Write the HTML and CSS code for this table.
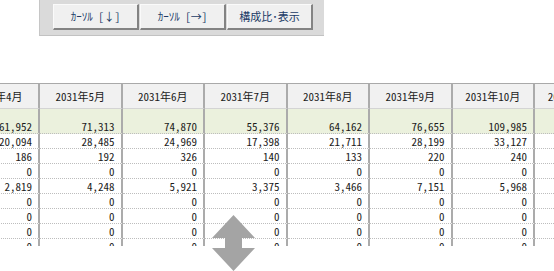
FILE: index.html
```html
<!DOCTYPE html>
<html lang="ja">
<head>
<meta charset="utf-8">
<title>月次推移</title>
<link rel="stylesheet" href="styles.css">
</head>
<body>
<div class="page">
  <div class="toolbar">
    <button class="btn">ｶｰｿﾙ [↓]</button>
    <button class="btn">ｶｰｿﾙ [→]</button>
    <button class="btn">構成比･表示</button>
  </div>

  <div class="grid-wrap">
    <table class="grid">
      <thead>
        <tr>
          <th>2031年4月</th><th>2031年5月</th><th>2031年6月</th><th>2031年7月</th>
          <th>2031年8月</th><th>2031年9月</th><th>2031年10月</th><th>2031年11月</th>
        </tr>
      </thead>
      <tbody>
        <tr class="total">
          <td>61,952</td><td>71,313</td><td>74,870</td><td>55,376</td><td>64,162</td><td>76,655</td><td>109,985</td><td>82,410</td>
        </tr>
        <tr>
          <td>20,094</td><td>28,485</td><td>24,969</td><td>17,398</td><td>21,711</td><td>28,199</td><td>33,127</td><td>26,502</td>
        </tr>
        <tr>
          <td>186</td><td>192</td><td>326</td><td>140</td><td>133</td><td>220</td><td>240</td><td>198</td>
        </tr>
        <tr>
          <td>0</td><td>0</td><td>0</td><td>0</td><td>0</td><td>0</td><td>0</td><td>0</td>
        </tr>
        <tr>
          <td>2,819</td><td>4,248</td><td>5,921</td><td>3,375</td><td>3,466</td><td>7,151</td><td>5,968</td><td>4,902</td>
        </tr>
        <tr>
          <td>0</td><td>0</td><td>0</td><td>0</td><td>0</td><td>0</td><td>0</td><td>0</td>
        </tr>
        <tr>
          <td>0</td><td>0</td><td>0</td><td>0</td><td>0</td><td>0</td><td>0</td><td>0</td>
        </tr>
        <tr>
          <td>0</td><td>0</td><td>0</td><td>0</td><td>0</td><td>0</td><td>0</td><td>0</td>
        </tr>
        <tr>
          <td>0</td><td>0</td><td>0</td><td>0</td><td>0</td><td>0</td><td>0</td><td>0</td>
        </tr>
      </tbody>
    </table>
  </div>

  <svg class="resize-arrow" width="43" height="56" viewBox="0 0 43 56" aria-hidden="true">
    <polygon points="21.5,0 43,23 30,23 30,33 43,33 21.5,56 0,33 13,33 13,23 0,23" fill="#a4a4a4"/>
  </svg>
</div>
</body>
</html>
```

FILE: styles.css
```css
html, body {
  margin: 0;
  padding: 0;
  background: #ffffff;
}

body {
  font-family: "Noto Sans CJK JP", "Noto Sans", sans-serif;
  color: #1c1c1c;
}

.page {
  position: relative;
  width: 554px;
  height: 271px;
  overflow: hidden;
}

/* ---------- toolbar ---------- */
.toolbar {
  box-sizing: border-box;
  margin-left: 39px;
  width: 285px;
  height: 36px;
  padding: 4px 0 0 13px;
  display: flex;
  gap: 1px;
  background: #dadada;
  border-left: 1px solid #c6c6c6;
  border-bottom: 1px solid #c2c2c2;
}

.btn {
  box-sizing: border-box;
  width: 86px;
  height: 26px;
  margin: 0;
  padding: 0 0 1px;
  background: #f0f0f0;
  border-top: 1px solid #fafafa;
  border-left: 1px solid #fafafa;
  border-right: 2px solid #838383;
  border-bottom: 2px solid #838383;
  border-radius: 0;
  font-family: "Noto Sans CJK JP", sans-serif;
  font-size: 11px;
  line-height: 14px;
  color: #203a66;
  font-feature-settings: "hwid";
}

/* ---------- grid ---------- */
.grid-wrap {
  margin-top: 47px;
  height: 163px;
  overflow: hidden;
}

.grid {
  margin-left: -42.5px;
  width: 660px;
  table-layout: fixed;
  border-collapse: separate;
  border-spacing: 0;
  font-size: 11px;
  font-feature-settings: "hwid";
}

.grid th {
  height: 24px;
  padding: 0;
  background: #f1f1f1;
  border-top: 1px solid #a9a9a9;
  border-bottom: 1px solid #d4d4d4;
  border-right: 2px solid #ababab;
  font-weight: normal;
  text-align: center;
  vertical-align: middle;
  line-height: 14px;
  color: #1c1c1c;
}

.grid td {
  height: 14px;
  padding: 0 6px 0 0;
  border-right: 2px solid #ababab;
  border-bottom: 1px dotted #bdbdbd;
  text-align: right;
  line-height: 14px;
  white-space: nowrap;
  color: #1c1c1c;
}

.grid tr.total td {
  height: 24px;
  background: #ebf1dd;
  vertical-align: bottom;
}

/* ---------- overlay arrow ---------- */
.resize-arrow {
  position: absolute;
  left: 212px;
  top: 215px;
  display: block;
}
```
